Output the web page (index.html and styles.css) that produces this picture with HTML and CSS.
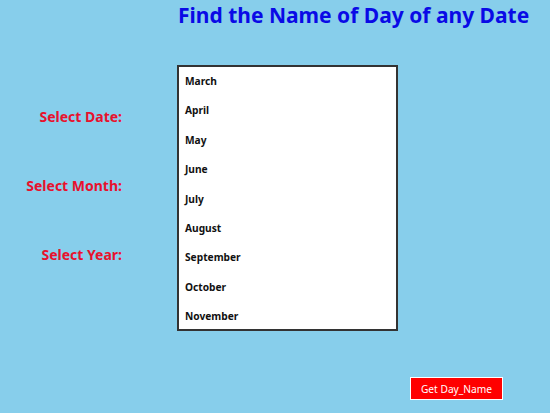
FILE: index.html
```html
<!DOCTYPE html>
<html>
<head>
<meta charset="utf-8">
<link rel="stylesheet" href="styles.css">
</head>
<body>
<div class="page">
  <h1 class="title">Find the Name of Day of any Date</h1>
  <div class="form">
    <div class="labels">
      <div class="label">Select Date:</div>
      <div class="label">Select Month:</div>
      <div class="label">Select Year:</div>
    </div>
    <ul class="listbox">
      <li>March</li>
      <li>April</li>
      <li>May</li>
      <li>June</li>
      <li>July</li>
      <li>August</li>
      <li>September</li>
      <li>October</li>
      <li>November</li>
    </ul>
  </div>
  <div class="actions">
    <button class="btn">Get Day_Name</button>
  </div>
</div>
</body>
</html>
```

FILE: styles.css
```css
html, body {
  margin: 0;
  padding: 0;
  background: #87ceeb;
  width: 550px;
  height: 413px;
  overflow: hidden;
  font-family: "Noto Sans", "Open Sans", sans-serif;
}
.page {
  display: flex;
  flex-direction: column;
}
.title {
  margin: 0;
  padding: 2px 0 0 178px;
  font-size: 21px;
  line-height: 27px;
  font-weight: 700;
  color: #0a0ae6;
  white-space: nowrap;
}
.form {
  display: flex;
  margin-top: 36px;
}
.labels {
  width: 122px;
  display: flex;
  flex-direction: column;
  align-items: flex-end;
  gap: 49px;
  padding-top: 42px;
}
.label {
  font-size: 14px;
  line-height: 20px;
  font-weight: 700;
  color: #e8112d;
  white-space: nowrap;
}
.listbox {
  list-style: none;
  margin: 0 0 0 55px;
  padding: 0;
  width: 217px;
  height: 262px;
  background: #fff;
  border: 2px solid #333;
  overflow: hidden;
}
.listbox li {
  height: 29.4px;
  line-height: 29.4px;
  padding-left: 6px;
  font-size: 10.2px;
  font-weight: 700;
  color: #111;
}
.actions {
  display: flex;
  justify-content: flex-end;
  padding-right: 47px;
  margin-top: 46px;
}
.btn {
  width: 93px;
  height: 23px;
  background: #ff0000;
  border: 1px solid #fff;
  color: #fff;
  font-family: "Noto Sans", "Open Sans", sans-serif;
  font-size: 10.2px;
  padding: 0;
}
```
